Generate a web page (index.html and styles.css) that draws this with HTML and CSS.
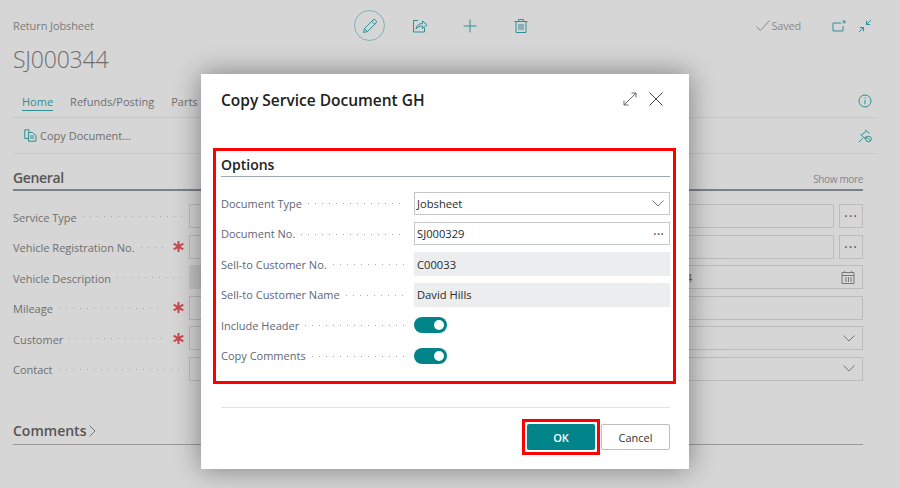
FILE: index.html
```html
<!DOCTYPE html>
<html lang="en">
  <head>
    <meta charset="UTF-8" />
    <title>Return Jobsheet</title>
    <link rel="stylesheet" href="styles.css">
  </head>
  <body>
    <div class="page">
      <div class="topbar">
        <div class="caption">Return Jobsheet</div>
        <div class="actions">
          <span class="edit-circle">
            <svg width="18" height="18" viewBox="0 0 18 18" fill="none" stroke="#2f8f94"><path d="M2.500 15.500l1-4L12 3a1.600 1.600 0 0 1 2.300 0l.7.7a1.600 1.600 0 0 1 0 2.300l-8.500 8.500z"/><path d="M10.700 4.300l3 3M3.500 11.500l3 3"/></svg>
          </span>
          <svg width="16" height="16" viewBox="0 0 16 16" fill="none" stroke="#2f8f94"><path d="M6 2.500H1.500v11.500h11V10"/><path d="M4 11c.5-3.500 3-5.500 6.500-5.500V3l4.500 3.800-4.500 3.700V8C8 8 5.500 9 4 11z"/></svg>
          <svg width="16" height="16" viewBox="0 0 16 16" fill="none" stroke="#2f8f94"><path d="M8 1.500v13M1.500 8h13"/></svg>
          <svg width="16" height="16" viewBox="0 0 16 16" fill="none" stroke="#2f8f94"><path d="M3 3.500v11h10v-11M1.500 3.500h13M5.500 3.500v-2h5v2"/><path d="M6 6v6M8 6v6M10 6v6"/></svg>
        </div>
        <div class="status">
          <svg width="14" height="12" viewBox="0 0 14 12" fill="none" stroke="#8a8a8a"><path d="M.5 6.500l4 4 9-10"/></svg>
          <span class="saved">Saved</span>
          <svg class="status-gap" width="14" height="12" viewBox="0 0 14 12" fill="none" stroke="#2f8f94"><path d="M9 3H1v8h10V6"/><path d="M10.500 3.500L13 1M10.500 1H13v2.500"/></svg>
          <svg width="14" height="14" viewBox="0 0 14 14" fill="none" stroke="#2f8f94"><path d="M13 1L8.500 5.500M8.500 1.800v3.700h3.700M1 13l4.500-4.500M1.800 8.500h3.700v3.700"/></svg>
        </div>
      </div>
      <h1 class="doc-no">SJ000344</h1>
      <div class="tabs">
        <span class="tab tab-active">Home</span>
        <span class="tab">Refunds/Posting</span>
        <span class="tab">Parts</span>
        <svg class="tabs-icon" width="14" height="14" viewBox="0 0 14 14" fill="none" stroke="#2f8f94"><circle cx="7" cy="7" r="6"/><path d="M7 6v4.200M7 3.600v1.100"/></svg>
      </div>
      <div class="ribbon">
        <svg width="13" height="13" viewBox="0 0 13 13" fill="none" stroke="#2f8f94"><path d="M5 3V.8H.8v8.700H4"/><path d="M4.500 3.500h4l3.500 3v5.700H4.500z"/><path d="M6 7h4M6 9h4"/></svg>
        <span>Copy Document...</span>
        <svg class="tabs-icon" width="14" height="14" viewBox="0 0 14 14" fill="none" stroke="#2f8f94"><path d="M.8 13.200l4-4M2.500 5.500L7.500 10M3.500 6l4.500-3.500M7 .8l4.500 3.500M7 9.800l.8-2.300"/><circle cx="10.500" cy="10" r="2.800"/><path d="M8.700 8.200l3.600 3.600"/></svg>
      </div>

      <div class="section-head section-head-strong">
        <span class="section-title">General</span>
        <span class="show-more">Show more</span>
      </div>
      <div class="form">
        <div class="row">
          <span class="label">Service Type</span><span class="leader"></span>
          <span class="input"></span><span class="more">&middot;&middot;&middot;</span>
        </div>
        <div class="row">
          <span class="label">Vehicle Registration No.</span><span class="leader"></span>
          <svg class="star" width="11" height="11" viewBox="0 0 11 11" fill="none" stroke="#c8494f" stroke-width="2"><path d="M5.500 0v11M.7 2.700l9.600 5.600M10.300 2.700L.7 8.300"/></svg>
          <span class="input"></span><span class="more">&middot;&middot;&middot;</span>
        </div>
        <div class="row">
          <span class="label">Vehicle Description</span><span class="leader"></span>
          <span class="input input-readonly"></span>
          <span class="input input-date">
            <span class="date-value">4</span>
            <svg width="14" height="14" viewBox="0 0 14 14" fill="none" stroke="#777"><path d="M1 2.500h12v11H1zM1 5.500h12M3.500 1v2M10.500 1v2M5 7v5M7.500 7v5M10 7v5"/></svg>
          </span>
        </div>
        <div class="row">
          <span class="label">Mileage</span><span class="leader"></span>
          <svg class="star" width="11" height="11" viewBox="0 0 11 11" fill="none" stroke="#c8494f" stroke-width="2"><path d="M5.500 0v11M.7 2.700l9.600 5.600M10.300 2.700L.7 8.300"/></svg>
          <span class="input"></span>
        </div>
        <div class="row">
          <span class="label">Customer</span><span class="leader"></span>
          <svg class="star" width="11" height="11" viewBox="0 0 11 11" fill="none" stroke="#c8494f" stroke-width="2"><path d="M5.500 0v11M.7 2.700l9.600 5.600M10.300 2.700L.7 8.300"/></svg>
          <span class="input input-select">
            <svg width="12" height="7" viewBox="0 0 12 7" fill="none" stroke="#777"><path d="M.5.500L6 6l5.500-5.500"/></svg>
          </span>
        </div>
        <div class="row">
          <span class="label">Contact</span><span class="leader"></span>
          <span class="input input-select">
            <svg width="12" height="7" viewBox="0 0 12 7" fill="none" stroke="#777"><path d="M.5.500L6 6l5.500-5.500"/></svg>
          </span>
        </div>
      </div>
      <div class="section-head section-head-comments">
        <span class="section-title">Comments</span>
        <svg width="7" height="12" viewBox="0 0 7 12" fill="none" stroke="#777"><path d="M.5.500L6 6 .5 11.500"/></svg>
      </div>
    </div>

    <div class="dialog">
      <div class="dialog-head">
        <span class="dialog-title">Copy Service Document GH</span>
        <svg class="dialog-icon" width="14" height="14" viewBox="0 0 14 14" fill="none" stroke="#666"><path d="M1 13L13 1M8.500 1H13v4.500M1 8.500V13h4.500"/></svg>
        <svg class="dialog-icon" width="14" height="14" viewBox="0 0 14 14" fill="none" stroke="#444"><path d="M.5.500l13 13M13.500.500l-13 13"/></svg>
      </div>
      <div class="options">
        <div class="options-title">Options</div>
        <div class="option"><span class="label">Document Type</span><span class="leader"></span>
          <span class="field">Jobsheet<svg width="12" height="7" viewBox="0 0 12 7" fill="none" stroke="#777"><path d="M.5.500L6 6l5.500-5.500"/></svg></span>
        </div>
        <div class="option"><span class="label">Document No.</span><span class="leader"></span>
          <span class="field">SJ000329<span class="field-more">&middot;&middot;&middot;</span></span>
        </div>
        <div class="option"><span class="label">Sell-to Customer No.</span><span class="leader"></span>
          <span class="field field-readonly">C00033</span>
        </div>
        <div class="option"><span class="label">Sell-to Customer Name</span><span class="leader"></span>
          <span class="field field-readonly">David Hills</span>
        </div>
        <div class="option"><span class="label">Include Header</span><span class="leader"></span>
          <span class="field-plain"><span class="toggle"></span></span>
        </div>
        <div class="option"><span class="label">Copy Comments</span><span class="leader"></span>
          <span class="field-plain"><span class="toggle"></span></span>
        </div>
      </div>
      <div class="dialog-foot">
        <span class="ok-mark"><button class="btn btn-ok">OK</button></span>
        <button class="btn btn-cancel">Cancel</button>
      </div>
    </div>
  </body>
</html>
```

FILE: styles.css
```css
html, body {
  margin: 0;
  height: 100%;
  overflow: hidden;
}
body {
  background: #d6d6d6;
  color: #6f6f6f;
  font: 11px 'Open Sans', 'Noto Sans', 'Liberation Sans', sans-serif;
}
svg {
  display: block;
  flex: none;
}

/* page behind the dialog */
.page {
  padding: 9px 37px 0 13px;
}
.topbar {
  display: grid;
  grid-template-columns: 341px auto 1fr;
  align-items: center;
  height: 33px;
}
.caption {
  color: #7a7a7a;
  letter-spacing: -.1px;
}
.actions {
  display: flex;
  align-items: center;
  gap: 34.500px;
}
.edit-circle {
  display: flex;
  align-items: center;
  justify-content: center;
  width: 31px;
  height: 31px;
  margin-right: -8px;
  border: 1px solid #7fb1b4;
  border-radius: 50%;
  box-sizing: border-box;
}
.status {
  display: flex;
  align-items: center;
  justify-content: flex-end;
  gap: 1px;
  margin-right: -9px;
  color: #8a8a8a;
}
.saved {
  letter-spacing: -.2px;
}
.status-gap {
  margin-left: 30px;
  margin-right: 11px;
}
.doc-no {
  margin: 0;
  height: 41px;
  padding-top: 1px;
  color: #6e6e6e;
  font: 300 23px/32px 'Open Sans', sans-serif;
  letter-spacing: -.2px;
}
.tabs, .ribbon {
  display: flex;
  align-items: center;
  margin-right: -15px;
  padding-right: 6px;
  border-bottom: 1px solid #c9c9c9;
}
.tabs {
  height: 33px;
  padding-left: 9px;
  gap: 17px;
}
.tab {
  padding: 4px 0 0;
  height: 21px;
  box-sizing: border-box;
  color: #6f6f6f;
}
.tab-active {
  color: #2f8f94;
  border-bottom: 1px solid #2f8f94;
}
.tabs-icon {
  margin-left: auto;
}
.ribbon {
  height: 35px;
  padding-left: 11px;
  gap: 3px;
}
.section-head {
  display: flex;
  align-items: flex-end;
  justify-content: space-between;
}
.section-head-strong {
  height: 35px;
  border-bottom: 2px solid #7b8088;
}
.section-title {
  color: #555;
  font: 600 14px/22px 'Open Sans', sans-serif;
}
.section-head-strong .section-title {
  letter-spacing: -.35px;
}
.show-more {
  color: #858585;
  font-size: 10px;
  line-height: 20px;
  letter-spacing: -.35px;
}
.form {
  display: flex;
  flex-direction: column;
  gap: 6.600px;
  padding-top: 13px;
}
.row {
  display: flex;
  align-items: center;
  height: 24px;
}
.label {
  flex: none;
  white-space: nowrap;
}
.row .label {
  margin-top: 2px;
}
.leader {
  flex: 1 1 0;
  height: 1px;
  margin: 1px 5px 0 6px;
  background: repeating-linear-gradient(90deg, #a8a8a8 0 1px, transparent 1px 7px);
}
.star {
  margin: 0 5px;
}
.input {
  display: flex;
  align-items: center;
  justify-content: flex-end;
  flex: 0 0 auto;
  width: 674px;
  height: 24px;
  padding: 0 7px;
  box-sizing: border-box;
  border: 1px solid #bcbcbc;
}
.row:nth-child(1) .input, .row:nth-child(2) .input {
  width: 645px;
}
.more {
  flex: none;
  width: 24px;
  height: 24px;
  margin-left: 5px;
  box-sizing: border-box;
  border: 1px solid #bcbcbc;
  color: #555;
  font-size: 14px;
  line-height: 21px;
  letter-spacing: 1px;
  text-align: center;
}
.input-readonly {
  width: 240px;
  border: 0;
  background: #c6c6c6;
}
.input-date {
  width: 424px;
  margin-left: 10px;
  justify-content: space-between;
}
.date-value {
  margin-left: 239px;
  color: #666;
}
.section-head-comments {
  justify-content: flex-start;
  align-items: center;
  gap: 3px;
  height: 32px;
  margin-top: 32px;
  padding-top: 6px;
  box-sizing: border-box;
  border-bottom: 1px solid #9a9a9a;
}

/* dialog */
.dialog {
  position: absolute;
  left: 201px;
  top: 74px;
  width: 488px;
  height: 395px;
  box-sizing: border-box;
  padding: 0 19px 0 12px;
  background: #fff;
  box-shadow: 0 0 26px rgba(0, 0, 0, .42);
}
.dialog-head {
  display: flex;
  align-items: center;
  gap: 12px;
  height: 50px;
  padding: 0 7px 0 8px;
}
.dialog-title {
  flex: 1;
  margin-top: 2px;
  color: #212121;
  font: 600 15.500px 'Open Sans', sans-serif;
}
.options {
  display: flex;
  flex-direction: column;
  box-sizing: border-box;
  width: 463px;
  height: 236px;
  margin-top: 24px;
  padding: 2px 3px 0 5px;
  border: 3px solid #f00;
}
.options-title {
  height: 23px;
  margin-bottom: 14px;
  border-bottom: 1px solid #a0a7b4;
  color: #212121;
  font: 600 14px/23px 'Open Sans', sans-serif;
}
.option {
  display: flex;
  align-items: center;
  height: 24px;
  margin-bottom: 6.600px;
  color: #5f6672;
}
.option .leader {
  margin-right: 9px;
}
.field {
  display: flex;
  align-items: center;
  justify-content: space-between;
  flex: none;
  width: 256px;
  height: 23px;
  padding: 0 5px 0 2px;
  box-sizing: border-box;
  border: 1px solid #c5c6cc;
  color: #2b2b2b;
  font-size: 11.200px;
}
.field-more {
  color: #555;
  font-size: 14px;
}
.field-readonly {
  height: 24px;
  border: 0;
  padding-left: 3px;
  background: #ecedef;
}
.field-plain {
  display: flex;
  flex: none;
  width: 256px;
}
.toggle {
  position: relative;
  width: 33px;
  height: 16px;
  border-radius: 8px;
  background: #008489;
}
.toggle::after {
  content: '';
  position: absolute;
  right: 3px;
  top: 3px;
  width: 10px;
  height: 10px;
  border-radius: 50%;
  background: #fff;
}
.dialog-foot {
  display: flex;
  align-items: center;
  justify-content: flex-end;
  margin: 23px 0 0 8px;
  padding-top: 11px;
  border-top: 1px solid #e2e2e2;
}
.ok-mark {
  display: flex;
  padding: 2px;
  margin-right: 1px;
  border: 3px solid #f00;
}
.btn {
  height: 26px;
  box-sizing: border-box;
  font: 600 11px 'Open Sans', sans-serif;
  border-radius: 2px;
}
.btn-ok {
  width: 68px;
  border: 0;
  background: #008489;
  color: #fff;
}
.btn-cancel {
  width: 69px;
  border: 1px solid #bdbdbd;
  background: #fff;
  color: #333;
  font-weight: 400;
}
```
